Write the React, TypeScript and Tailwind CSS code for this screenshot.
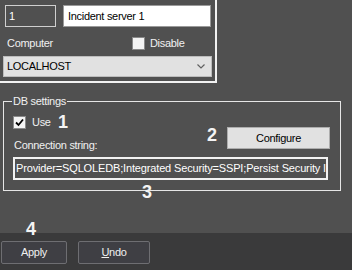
import React from "react";

const font = { fontFamily: '"Liberation Sans", Arial, sans-serif' };

function CheckBox({ checked }: { checked?: boolean }) {
  return (
    <div className="w-[13px] h-[13px] bg-[#f4f4f4] border border-[#8a8a8a] flex items-center justify-center shrink-0">
      {checked && (
        <svg width="9" height="9" viewBox="0 0 9 9">
          <path d="M1 4.5 L3.5 7 L8 1.5" stroke="#000" strokeWidth="1.8" fill="none" />
        </svg>
      )}
    </div>
  );
}

export default function App() {
  return (
    <div
      className="relative w-[352px] h-[270px] bg-[#505050] flex flex-col text-[11px] tracking-[-0.3px] text-white overflow-hidden"
      style={font}
    >
      {/* Top panel */}
      <div className="w-[217px] h-[83px] border-r-2 border-b-2 border-[#f2f2f2] pl-[3px] flex flex-col shrink-0">
        <div className="mt-[5px] ml-[2px] flex gap-[7px]">
          <div className="w-[51px] h-[22px] border border-[#cfcfcf] flex items-center pl-[3px] text-white">1</div>
          <div className="w-[148px] h-[22px] bg-white border border-[#9a9a9a] flex items-center pl-[4px] text-black">
            Incident server 1
          </div>
        </div>
        <div className="mt-[9px] h-[14px] flex items-center">
          <span className="ml-[4px] text-[#f0f0f0]">Computer</span>
          <div className="ml-[79px] flex items-center gap-[5px]">
            <CheckBox />
            <span className="text-[#f0f0f0]">Disable</span>
          </div>
        </div>
        <div className="mt-[6px] w-[209px] h-[21px] bg-[#e1e1e1] border border-[#bcbcbc] flex items-center justify-between pl-[3px] pr-[6px] text-black">
          <span>LOCALHOST</span>
          <svg width="8" height="5" viewBox="0 0 8 5">
            <path d="M0.5 0.5 L4 4 L7.5 0.5" stroke="#606060" strokeWidth="1.2" fill="none" />
          </svg>
        </div>
      </div>

      {/* DB settings group */}
      <fieldset className="mt-[11px] ml-[3px] w-[338px] border border-[#e6e6e6] pb-[10px] shrink-0">
        <legend className="ml-[8px] px-[1px] text-[#f0f0f0] leading-[14px]">DB settings</legend>
        <div className="flex justify-between">
          <div className="flex flex-col pl-[9px]">
            <div className="mt-[7px] h-[14px] flex items-center gap-[6px]">
              <CheckBox checked />
              <span className="text-[#f0f0f0]">Use</span>
            </div>
            <div className="mt-[9px] h-[14px] flex items-center pl-[1px] text-[#f0f0f0]">Connection string:</div>
          </div>
          <div className="mt-[19px] mr-[10px] w-[103px] h-[22px] bg-[#e1e1e1] border border-[#adadad] flex items-center justify-center text-black">
            Configure
          </div>
        </div>
        <div className="mt-[5px] ml-[9px] w-[315px] h-[23px] border-2 border-[#f2f2f2] flex items-center pl-[1px] overflow-hidden whitespace-nowrap tracking-[-0.15px] text-white">
          Provider=SQLOLEDB;Integrated Security=SSPI;Persist Security Info=False
        </div>
      </fieldset>

      <div className="flex-1" />

      {/* Bottom bar */}
      <div className="h-[37px] bg-[#3a3a3b] flex items-start pt-[8px] pl-[1px] gap-[11px] shrink-0">
        <div className="w-[66px] h-[23px] rounded-[2px] border border-[#6e6e72] bg-[#3f3f44] flex items-center justify-center text-[#f0f0f0]">
          Apply
        </div>
        <div className="w-[72px] h-[23px] rounded-[2px] border border-[#6e6e72] bg-[#3f3f44] flex items-center justify-center text-[#f0f0f0]">
          <span className="underline">U</span>ndo
        </div>
      </div>

      {/* Annotation numbers */}
      <span className="absolute left-[58px] top-[113px] text-[18px] font-bold leading-none tracking-normal text-[#f4f4f4]">1</span>
      <span className="absolute left-[207px] top-[126px] text-[18px] font-bold leading-none tracking-normal text-[#f4f4f4]">2</span>
      <span className="absolute left-[142px] top-[183px] text-[18px] font-bold leading-none tracking-normal text-[#f4f4f4]">3</span>
      <span className="absolute left-[26px] top-[220px] text-[18px] font-bold leading-none tracking-normal text-[#f4f4f4]">4</span>
    </div>
  );
}
